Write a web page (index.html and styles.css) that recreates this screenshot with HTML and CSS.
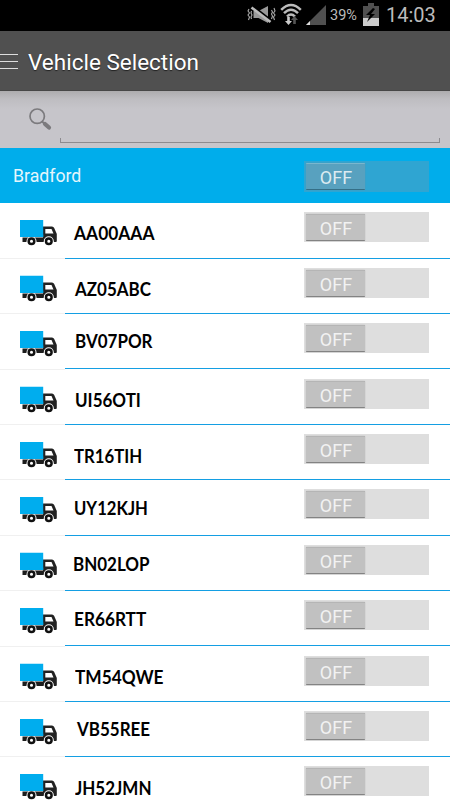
FILE: index.html
```html
<!DOCTYPE html>
<html lang="en">
<head>
  <meta charset="UTF-8" />
  <title>Vehicle Selection</title>
  <link rel="stylesheet" href="styles.css">
</head>
<body>
  <div class="status-bar">
    <svg class="mute" width="29" height="20" viewBox="0 0 29 20">
      <path d="M6.500 6h5l9.500-5v17l-9.500-5h-5z" fill="#999"/>
      <path d="M6 1.500l18 14" stroke="#000" stroke-width="2.500"/>
      <path d="M4.500 2.500l19 14.500" stroke="#bbb" stroke-width="2.600"/>
      <path d="M2 4l-1 2 1.500 2-1.500 2 1.500 2-1 3M4.500 6l-.5 2 1 2-1 2 .5 2M24.500 5l1 2-1 2 1 2-1 3M27 3l1 3-1.500 2 1.500 2-1.500 2 1 3" fill="none" stroke="#aaa" stroke-width="1.100"/>
    </svg>
    <svg class="wifi" width="22" height="23" viewBox="0 0 22 23">
      <path d="M1.200 6.800Q11-2.800 20.800 6.800M4 10.200Q11 3.400 18 10.200M7 13.500Q11 9.300 15 13.500" fill="none" stroke="#bbb" stroke-width="2.500"/>
      <path d="M8.500 22l-3.500-4h2.200v-4h2.600v4H12z" fill="#ccc"/>
      <path d="M14.500 13l3.500 4h-2.200v4h-2.600v-4H11z" fill="#555"/>
    </svg>
    <svg class="signal" width="20" height="20" viewBox="0 0 20 20">
      <path d="M20 0v20H0z" fill="#505050"/>
      <path d="M4 16v4H0z" fill="#ddd"/>
    </svg>
    <span class="percent">39%</span>
    <svg class="battery" width="16" height="23" viewBox="0 0 16 23">
      <path d="M5 0h6v3h5v12H0V3h5z" fill="#505050"/>
      <path d="M0 15h16v8H0z" fill="#ccc"/>
      <path d="M10 5l-7 7h4l-3 7 8-8H8l4-5z" fill="#000"/>
    </svg>
    <span class="clock">14:03</span>
  </div>

  <div class="title-bar">
    <div class="menu-icon"><i></i><i></i><i></i></div>
    <h1>Vehicle Selection</h1>
  </div>

  <div class="search-bar">
    <svg class="search-icon" width="23" height="23" viewBox="0 0 23 23">
      <circle cx="8.200" cy="8.200" r="7.200" fill="none" stroke="#7b7a7d" stroke-width="1.700"/>
      <path d="M13 13.500l3 2.500" stroke="#7b7a7d" stroke-width="2"/>
      <path d="M16 16l4 3.500" stroke="#7b7a7d" stroke-width="4.200" stroke-linecap="round"/>
    </svg>
    <div class="search-input"></div>
  </div>

  <div class="depot">
    <span>Bradford</span>
    <div class="switch"><div class="thumb">OFF</div></div>
  </div>

  <!-- truck icon shared by all rows -->
  <svg class="sprite" width="0" height="0">
    <symbol id="truck" viewBox="0 0 37 28">
      <path d="M2.500 18h21v4.500H2.500z" fill="#1c1c1c"/>
      <path d="M23 7h9q1.500 0 2.200 1.500l2.600 6v7q0 1-1 1H23z" fill="#222"/>
      <path d="M25.300 9.500h6.200l2 4.500h-8.200z" fill="#fff"/>
      <path d="M0 0h23.200v17.500H0z" fill="#00adee"/>
      <circle cx="11.500" cy="21.700" r="5" fill="#fff"/>
      <circle cx="28.800" cy="21.700" r="5" fill="#fff"/>
      <circle cx="11.500" cy="21.700" r="2.800" fill="#fff" stroke="#111" stroke-width="2.500"/>
      <circle cx="28.800" cy="21.700" r="2.800" fill="#fff" stroke="#111" stroke-width="2.500"/>
      <path d="M0 15h23.200v2.500H0z" fill="#00adee"/>
    </symbol>
  </svg>

  <div class="vehicles">
    <div class="row">
      <svg class="truck"><use href="#truck"/></svg>
      <div class="info"><span class="reg reg-1">AA00AAA</span><div class="switch"><div class="thumb">OFF</div></div></div>
    </div>
    <div class="row">
      <svg class="truck"><use href="#truck"/></svg>
      <div class="info"><span class="reg reg-2">AZ05ABC</span><div class="switch"><div class="thumb">OFF</div></div></div>
    </div>
    <div class="row">
      <svg class="truck"><use href="#truck"/></svg>
      <div class="info"><span class="reg reg-3">BV07POR</span><div class="switch"><div class="thumb">OFF</div></div></div>
    </div>
    <div class="row">
      <svg class="truck"><use href="#truck"/></svg>
      <div class="info"><span class="reg reg-4">UI56OTI</span><div class="switch"><div class="thumb">OFF</div></div></div>
    </div>
    <div class="row">
      <svg class="truck"><use href="#truck"/></svg>
      <div class="info"><span class="reg reg-5">TR16TIH</span><div class="switch"><div class="thumb">OFF</div></div></div>
    </div>
    <div class="row">
      <svg class="truck"><use href="#truck"/></svg>
      <div class="info"><span class="reg reg-6">UY12KJH</span><div class="switch"><div class="thumb">OFF</div></div></div>
    </div>
    <div class="row">
      <svg class="truck"><use href="#truck"/></svg>
      <div class="info"><span class="reg reg-7">BN02LOP</span><div class="switch"><div class="thumb">OFF</div></div></div>
    </div>
    <div class="row">
      <svg class="truck"><use href="#truck"/></svg>
      <div class="info"><span class="reg reg-8">ER66RTT</span><div class="switch"><div class="thumb">OFF</div></div></div>
    </div>
    <div class="row">
      <svg class="truck"><use href="#truck"/></svg>
      <div class="info"><span class="reg reg-9">TM54QWE</span><div class="switch"><div class="thumb">OFF</div></div></div>
    </div>
    <div class="row">
      <svg class="truck"><use href="#truck"/></svg>
      <div class="info"><span class="reg reg-10">VB55REE</span><div class="switch"><div class="thumb">OFF</div></div></div>
    </div>
    <div class="row">
      <svg class="truck"><use href="#truck"/></svg>
      <div class="info"><span class="reg reg-11">JH52JMN</span><div class="switch"><div class="thumb">OFF</div></div></div>
    </div>
  </div>
</body>
</html>
```
FILE: styles.css
```css
* {
  box-sizing: border-box;
}

body {
  margin: 0;
  width: 450px;
  height: 800px;
  overflow: hidden;
  display: flex;
  flex-direction: column;
  background: #fff;
  font-family: Roboto, sans-serif;
}

.status-bar {
  flex: none;
  display: flex;
  align-items: flex-start;
  height: 31px;
  padding-left: 247px;
  background: #000;
  color: #bbb;
}

.mute {
  margin-top: 5px;
}

.wifi {
  margin: 3px 0 0 4px;
}

.signal {
  margin: 5px 0 0 4px;
}

.percent {
  width: 33px;
  margin-left: 4px;
  font-size: 14.5px;
  line-height: 32px;
}

.battery {
  margin-top: 3px;
}

.clock {
  margin-left: 7px;
  font-size: 20px;
  line-height: 31px;
}

.title-bar {
  flex: none;
  display: flex;
  align-items: center;
  height: 60px;
  background: #505050;
  border-bottom: 1px solid #474747;
}

.menu-icon {
  display: flex;
  flex-direction: column;
  gap: 6px;
  width: 18px;
  margin: 2px 10px 0 0;
}

.menu-icon i {
  height: 1px;
  background: #ddd;
}

h1 {
  margin: 3px 0 0;
  color: #fff;
  font-size: 22.5px;
  font-weight: 400;
  text-shadow: 0 1px 1px #222;
}

.search-bar {
  flex: none;
  display: flex;
  height: 57px;
  padding: 0 10px 0 29px;
  background: linear-gradient(#adacae, #bebdc1 8px, #c6c5ca 18px);
}

.search-icon {
  margin: 17px 8px 0 0;
}

.search-input {
  flex: 1;
  height: 5px;
  margin-top: 47px;
  border: 1px solid #8c8b8f;
  border-top: 0;
}

.depot {
  flex: none;
  display: flex;
  justify-content: space-between;
  height: 55.4px;
  padding: 13px 21px 0 13px;
  background: #00adeb;
  color: #e4f6fd;
  font-size: 17.7px;
  line-height: 31px;
}

.switch {
  flex: none;
  width: 125px;
  height: 30px;
  padding: 2px;
  background: #dedede;
}

.thumb {
  width: 59px;
  height: 27px;
  padding-left: 1px;
  background: #c1c1c1;
  border-top: 1px solid #b5b5b5;
  border-bottom: 1px solid #838383;
  border-radius: 1px;
  box-shadow: 0 0 1px #888;
  color: #f2f2f2;
  font-size: 18px;
  font-weight: 400;
  line-height: 27px;
  text-align: center;
}

.depot .switch {
  height: 31px;
  background: #2fa5d2;
}

.depot .thumb {
  background: #58a1bf;
  border-top-color: #78b7cf;
  border-bottom-color: #356f87;
  color: #dcebf1;
}

.sprite {
  display: none;
}

.row {
  display: flex;
  height: 55.4px;
}

.truck {
  flex: none;
  width: 65px;
  height: 55.4px;
  padding: 16.6px 8px 9.8px 20px;
  border-bottom: 1px solid #f0f0f0;
}

.info {
  flex: 1;
  display: flex;
  align-items: flex-start;
  justify-content: space-between;
  height: 55.2px;
  padding: 9px 21px 0 9px;
  border-bottom: 1px solid #149fe3;
}

/* plate text */
.reg {
  color: #000;
  font-family: Lato, sans-serif;
  font-size: 18px;
  font-weight: 700;
  line-height: 20px;
  transform: scaleX(.943);
  transform-origin: 0 0;
}

.reg-1 { margin-top: 11px; transform: scaleX(.965); }
.reg-2 { margin-top: 11px; margin-left: 1px; }
.reg-3 { margin-top: 8px; margin-left: 1px; }
.reg-4 { margin-top: 11px; margin-left: 1px; }
.reg-5 { margin-top: 12px; transform: scaleX(.93); }
.reg-6 { margin-top: 9px; transform: scaleX(.925); }
.reg-7 { margin-top: 9px; margin-left: -1px; }
.reg-8 { margin-top: 9px; transform: scaleX(.955); }
.reg-9 { margin-top: 11px; margin-left: 1px; transform: scaleX(.96); }
.reg-10 { margin-top: 8px; margin-left: 3px; }
.reg-11 { margin-top: 12px; margin-left: 1px; }
```
